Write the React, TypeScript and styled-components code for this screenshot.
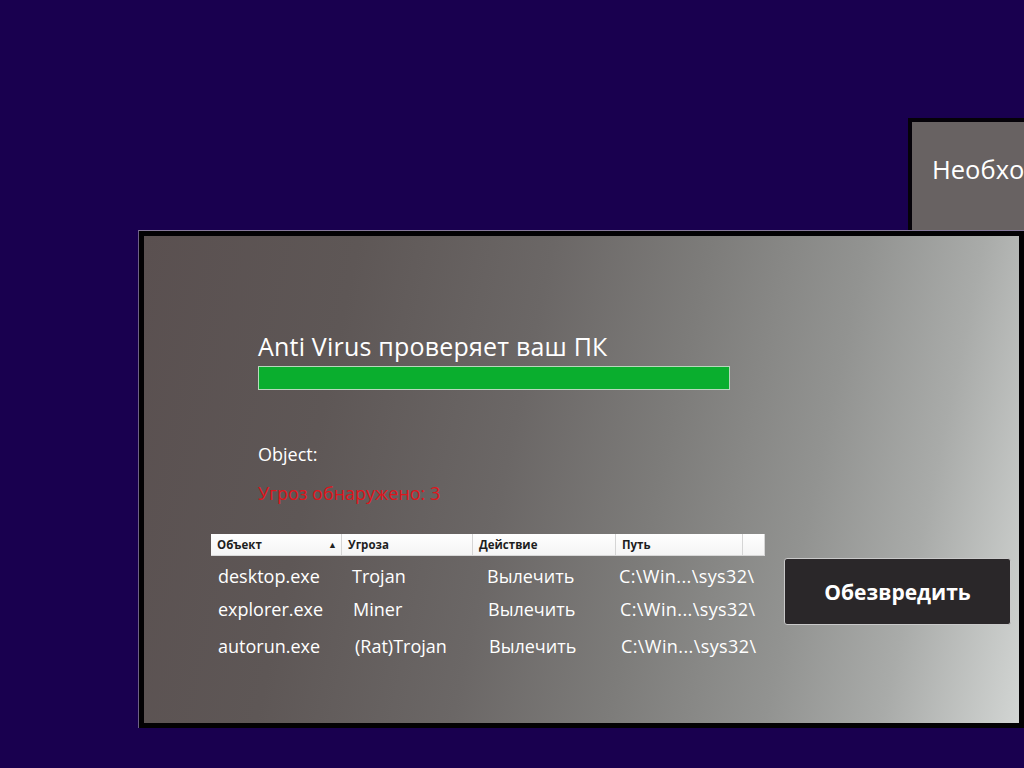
import React from "react";
import styled, { createGlobalStyle } from "styled-components";

const Global = createGlobalStyle`
  html, body { margin: 0; padding: 0; width: 1024px; height: 768px; overflow: hidden; background: #19004f; }
  #root { width: 1024px; height: 768px; position: relative; }
  * { box-sizing: border-box; }
`;

const Desktop = styled.div`
  position: relative;
  width: 1024px;
  height: 768px;
  background: #19004f;
  font-family: "Open Sans", "Noto Sans", sans-serif;
  overflow: hidden;
`;

const BackWindow = styled.div`
  position: absolute;
  left: 908px;
  top: 118px;
  width: 320px;
  height: 140px;
  border: 4px solid #050208;
  background: #686262;
  padding: 31px 0 0 20px;
  color: #ffffff;
  font-size: 25.5px;
  line-height: 32px;
  white-space: nowrap;
`;

const Frame = styled.div`
  position: absolute;
  left: 138px;
  top: 230px;
  width: 886px;
  height: 498px;
  background: #020103;
  border-top: 1px solid #85789a;
  border-left: 1px solid #6c5f86;
  padding: 5px;
`;

const Panel = styled.div`
  width: 100%;
  height: 100%;
  background: linear-gradient(102deg, #5a5050 0%, #5e5756 22%, #6b6766 42%, #7d7c7a 58%, #929391 74%, #a9aba9 86%, #d2d5d3 100%);
  display: flex;
  flex-direction: column;
  padding: 94px 0 0 67px;
  color: #ffffff;
`;

const Intro = styled.div`
  margin-left: 47px;
  display: flex;
  flex-direction: column;
`;

const Title = styled.div`
  font-size: 25px;
  letter-spacing: 0.2px;
  line-height: 32px;
  color: #ffffff;
  white-space: nowrap;
`;

const Progress = styled.div`
  margin-top: 4px;
  width: 472px;
  height: 24px;
  border: 1px solid #b9d8bd;
  background: #0aae2e;
`;

const Label = styled.div<{ $red?: boolean }>`
  font-size: 18px;
  line-height: 24px;
  color: ${(p) => (p.$red ? "#e0141c" : "#ffffff")};
  margin-top: ${(p) => (p.$red ? "15px" : "52px")};
  white-space: nowrap;
`;

const Bottom = styled.div`
  margin-top: 29px;
  display: flex;
  align-items: flex-start;
  gap: 19px;
`;

const Table = styled.div`
  width: 554px;
  display: flex;
  flex-direction: column;
`;

const Header = styled.div`
  display: grid;
  grid-template-columns: 131px 131px 143px 127px 22px;
  height: 22px;
  background: linear-gradient(#ffffff, #f4f4f4);
  border-bottom: 1px solid #d8d8d8;
`;

const HeadCell = styled.div`
  position: relative;
  border-right: 1px solid #d5d5d5;
  padding-left: 6px;
  font-size: 11.5px;
  font-weight: 700;
  color: #1e1e1e;
  line-height: 21px;
  white-space: nowrap;
`;

const SortArrow = styled.span`
  position: absolute;
  right: 4px;
  top: 0;
  font-size: 9px;
  color: #222;
`;

const Row = styled.div<{ $h: number; $shift: number }>`
  display: grid;
  grid-template-columns: ${(p) => `134px ${135 + p.$shift}px 132px 150px`};
  height: ${(p) => p.$h}px;
  align-items: center;
  padding-left: 7px;
  font-size: 18px;
  color: #ffffff;
  white-space: nowrap;
`;

const Cell = styled.div<{ $indent?: number }>`
  padding-left: ${(p) => p.$indent ?? 0}px;
`;

const PathCell = styled(Cell)`
  letter-spacing: 0.4px;
`;

const ActionButton = styled.button`
  margin-top: 24px;
  width: 227px;
  height: 67px;
  background: #2a2729;
  border: 1px solid #c9c9c9;
  border-radius: 3px;
  color: #ffffff;
  font-family: "Open Sans", "Noto Sans", sans-serif;
  font-size: 21px;
  font-weight: 700;
  padding: 0;
`;

const rows = [
  { h: 40, shift: 0, first: 0, cells: ["desktop.exe", "Trojan", "Вылечить", "C:\\Win...\\sys32\\"] },
  { h: 26, shift: 1, first: 1, cells: ["explorer.exe", "Miner", "Вылечить", "C:\\Win...\\sys32\\"] },
  { h: 48, shift: 2, first: 3, cells: ["autorun.exe", "(Rat)Trojan", "Вылечить", "C:\\Win...\\sys32\\"] },
];

export default function App() {
  return (
    <>
      <Global />
      <Desktop>
        <BackWindow>Необхо</BackWindow>
        <Frame>
          <Panel>
            <Intro>
              <Title>Anti Virus проверяет ваш ПК</Title>
              <Progress />
              <Label>Object:</Label>
              <Label $red>Угроз обнаружено: 3</Label>
            </Intro>
            <Bottom>
              <Table>
                <Header>
                  <HeadCell>
                    Объект<SortArrow>▲</SortArrow>
                  </HeadCell>
                  <HeadCell>Угроза</HeadCell>
                  <HeadCell>Действие</HeadCell>
                  <HeadCell>Путь</HeadCell>
                  <HeadCell />
                </Header>
                {rows.map((r, i) => (
                  <Row key={i} $h={r.h} $shift={r.shift}>
                    <Cell>{r.cells[0]}</Cell>
                    <Cell $indent={r.first}>{r.cells[1]}</Cell>
                    <Cell>{r.cells[2]}</Cell>
                    <PathCell>{r.cells[3]}</PathCell>
                  </Row>
                ))}
              </Table>
              <ActionButton>Обезвредить</ActionButton>
            </Bottom>
          </Panel>
        </Frame>
      </Desktop>
    </>
  );
}
